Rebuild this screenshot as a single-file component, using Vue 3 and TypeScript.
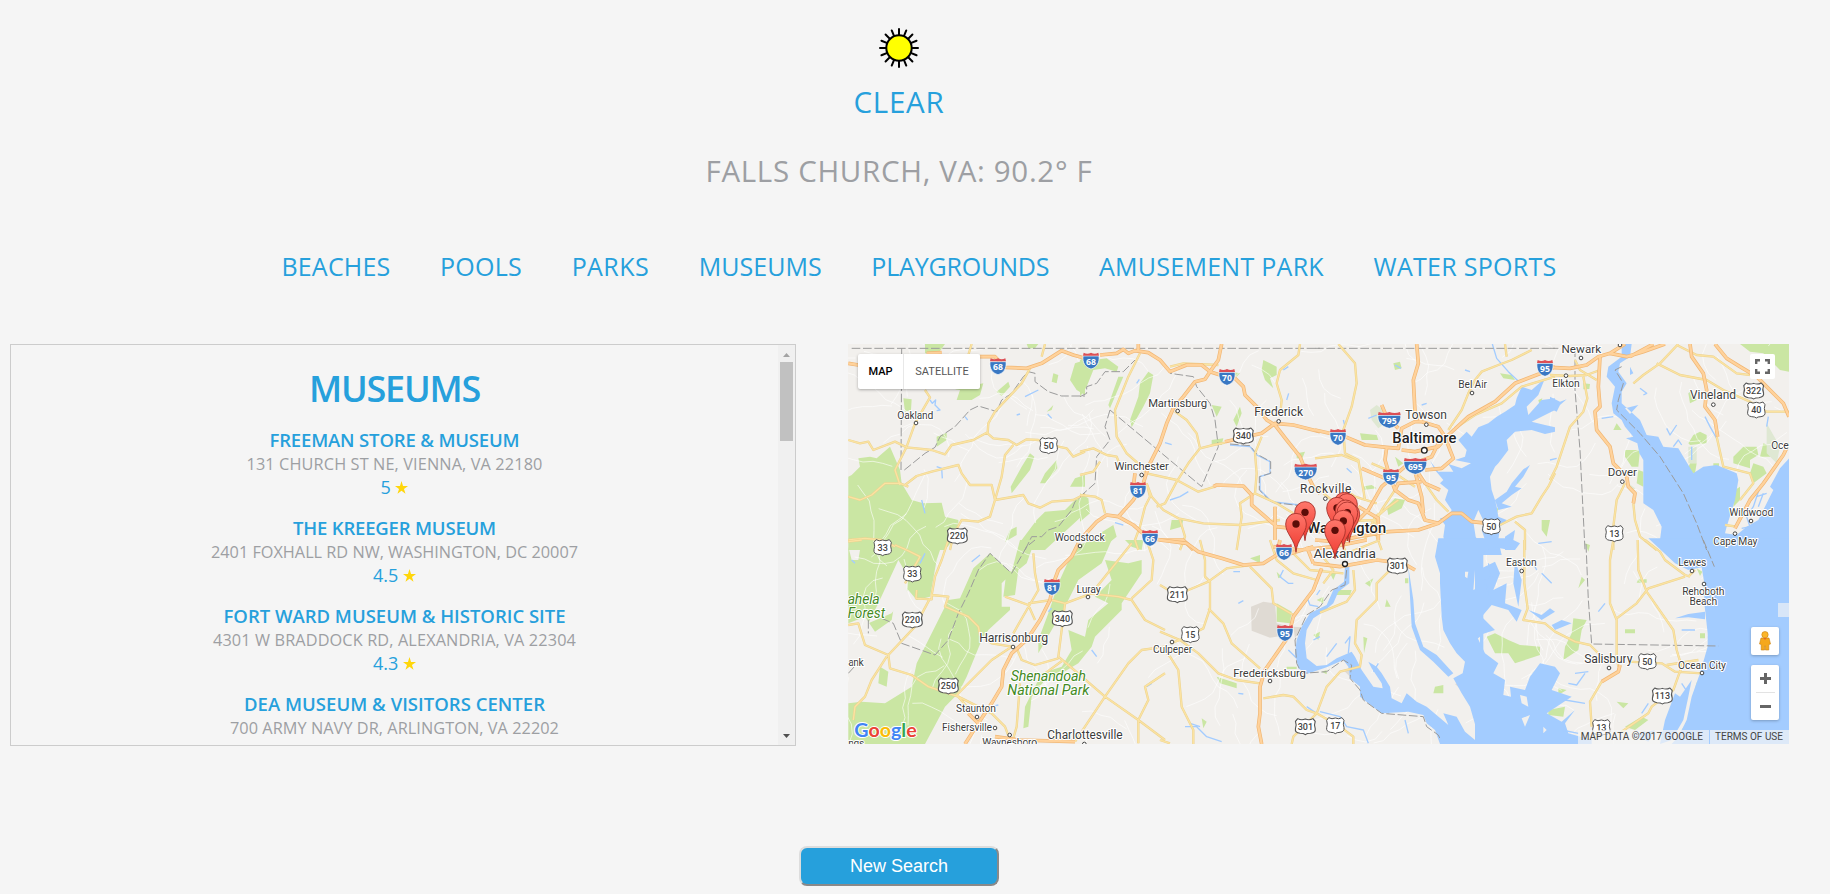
<script setup lang="ts">
interface Place { name: string; nameW: number; address: string; addressW: number; rating: string }
interface Tile {
  x: number; y: number
  water?: string; land?: string; green?: string; pale?: string; grey?: string
  stream?: string; road?: string; highway?: string; border?: string
}
/* Labels: tile index, x centre, baseline, width, font size, text */
type Label = [number, number, number, number, number, string]
type Point = [number, number, number]
type Shield = [number, number, number, string]

const ctx = document.createElement('canvas').getContext('2d')!
const family = '"Open Sans", "Noto Sans", sans-serif'

/* Letter spacing that sets a line of text to a given width. */
function track(text: string, size: number, width: number, weight = 400) {
  ctx.font = `${weight} ${size}px ${family}`
  const spacing = (width - ctx.measureText(text).width) / text.length
  return { letterSpacing: `${spacing.toFixed(3)}px` }
}

const categories: [string, number][] = [
  ['BEACHES', 109], ['POOLS', 82], ['PARKS', 77.5], ['MUSEUMS', 123],
  ['PLAYGROUNDS', 178], ['AMUSEMENT PARK', 225], ['WATER SPORTS', 183],
]

const places: Place[] = [
  { name: 'FREEMAN STORE & MUSEUM', nameW: 250, address: '131 CHURCH ST NE, VIENNA, VA 22180', addressW: 296, rating: '5' },
  { name: 'THE KREEGER MUSEUM', nameW: 203, address: '2401 FOXHALL RD NW, WASHINGTON, DC 20007', addressW: 367, rating: '4.5' },
  { name: 'FORT WARD MUSEUM & HISTORIC SITE', nameW: 342, address: '4301 W BRADDOCK RD, ALEXANDRIA, VA 22304', addressW: 363, rating: '4.3' },
  { name: 'DEA MUSEUM & VISITORS CENTER', nameW: 301, address: '700 ARMY NAVY DR, ARLINGTON, VA 22202', addressW: 329, rating: '' },
]

const rays = Array.from({ length: 16 }, (_, i) => i * 22.5)

const tiles: Tile[] = [
  {
    x: 0, y: 0,
    green: 'M10 410L20 405 45 380 40 355 75 350 95 355 135 320 165 390 170 430 200 480 235 490 290 488 300 530 340 540 340 580 300 630H10ZM240 12H300L280 40H240ZM415 130L405 165 380 180 335 180 345 150 330 148ZM490 125L495 140 470 168 455 155ZM275 290L305 278V300L275 320ZM175 175L200 178 198 210 180 215ZM690 70L720 60V165L695 150 675 120ZM555 340L568 350 555 390 500 460 497 440 530 380ZM635 360L637 385 600 430 585 430 600 400ZM720 470L690 480 660 510 600 515 575 540 530 600 520 630H600L720 520ZM720 405L690 415 675 440 720 440ZM495 570L515 560V585L480 605ZM625 100L640 105 635 130 620 125ZM605 215L625 195 620 210ZM545 12H580L570 25H550Z',
    stream: 'M255 180L262 190 272 180 270 195 285 210 275 212M360 230L368 240M275 380L290 385 292 415M540 170L580 150M608 222L620 235M230 480L240 520M515 225L525 222M335 60L345 45',
    road: 'M10 300L45 310 70 305 85 330 150 305 185 322 260 330 300 343 320 315 385 300 425 278 445 295 490 300 515 315 545 298 580 300 640 320 665 325 685 350 720 335M240 150L255 172 210 250 185 320 150 390 165 435M555 85L530 130 450 215 430 250 428 278M505 315L480 345 470 410 450 480 435 530 400 545 350 540 325 585 315 630M180 435L215 408 260 395 340 375 350 400 375 435 440 435 450 480 535 465 550 490 585 503 620 485 685 480 720 462M10 470L45 480 80 465 120 430 165 430 190 440M380 12L370 45M600 12L590 50M10 600L60 595 110 600 150 620',
    highway: 'M405 50L450 50 480 82 545 85 590 70 650 32 685 45 720 55M10 70L40 75M245 40L290 38',
    border: 'M20 25H720M170 25L168 390M178 390L240 340 270 322 285 290 330 260 375 210 400 198 440 210 455 215 470 180 500 160 535 110 550 95 570 100 570 125 610 155 650 168 720 168M720 460L690 485 680 510 640 560 610 570 590 590 560 590 540 630',
  },
  {
    x: 705, y: 0,
    green: 'M0 60L20 50 40 60 80 55 115 80 110 95 75 85 40 90 20 140 0 170ZM205 95L220 105 210 160 190 200 155 262 150 240 175 170 180 130ZM115 110L130 110 90 205 85 195ZM550 60L590 80V105L570 115 580 145 555 120 545 90ZM480 200L485 220 470 260 460 240ZM650 340L675 335 665 360 650 355ZM0 460L25 475 30 520 0 545ZM60 580L100 555 110 590 60 630H30ZM275 540H310L305 560 270 570ZM395 195L425 200 410 230ZM395 300L430 295 425 315 395 312ZM450 95L480 100 470 110Z',
    stream: 'M450 315L510 320 530 345 570 365V400L540 410V450L575 485 660 495M170 130L178 118M255 308L275 314M270 480L300 470 325 455M610 90L625 80M620 180L626 160M105 548L130 555',
    road: 'M180 40L145 110 105 210 110 290 140 340 180 375 200 400 290 420 355 455 405 440M285 215L320 240 350 280 360 325 400 315 435 308M360 325L325 370 290 425 255 490 230 500M0 335L40 325 80 345 110 350 120 375 155 380M0 405L40 395 60 365M200 430L215 470 250 510 295 535 370 550 480 555 600 540M660 12L655 45 600 90 590 130 605 180 600 230M545 290L525 340 530 400 525 460 480 490 485 530 470 630M300 540L315 590 300 630M200 430L210 470 195 500 180 560 165 600 175 630M270 80L310 70 415 75M0 465L45 470 65 480 75 520M525 460L590 490 640 520',
    highway: 'M60 45L110 40 130 28 145 40 165 32 205 38 240 60 270 95 320 75 365 75 390 95 420 105 465 115 490 140 495 165 530 200 560 240 585 255 620 300 660 350 680 400 700 440 720 460M425 12L415 60 390 95 375 118 345 125 310 170 280 205 260 250 240 310 205 380 190 430 160 480 115 530 80 525 50 545 0 600M115 530L160 555 200 590 240 600 310 600 340 630M435 305L500 290 545 280 585 250 640 255 720 275M175 12V32M400 440L410 435 490 438 515 465V495L550 525 590 560 720 575M585 500V600M165 400L160 440',
    border: 'M0 25H720M0 170L20 160 20 140 50 130 75 95 130 95 165 60M90 210L75 260 90 300 50 350 45 430 0 470M90 210L365 440 415 320 405 240 390 190 350 140 340 110 270 100M450 312L510 317 530 342 572 365V400L538 410V450L575 487 660 497',
  },
  {
    x: 1410, y: 0,
    water: 'M620 140L605 175 600 195 570 215 545 230 520 250 490 262 470 290 455 275 430 300 455 330 450 350 420 360 468 370 440 385 400 372 415 395 370 395 345 362 360 390 385 420 375 430 400 450 390 480 410 510 400 530 375 535 390 555 385 590 400 645H560L550 600 555 560 575 540 550 530 545 500 540 480 530 450 525 410 540 380 550 370 580 330 575 300 600 275 650 270 690 282 720 275V262L690 255 650 245 690 225 720 210V175L680 180 640 225 635 200 670 165 690 115 650 150ZM540 480L575 455 590 430 625 388 645 375 625 410 600 440 620 445 590 465 560 490 590 500 550 510ZM570 590L600 570 595 600 615 610 600 630H570Z',
    land: 'M490 510L475 545 482 590 500 622 510 600 500 570 507 545Z',
    green: 'M215 500L240 475 270 480 260 505 220 525ZM135 280L185 285 190 300 140 300ZM240 350L265 370 250 380ZM555 100L590 105 600 120 565 115ZM680 540H705L695 590 680 570ZM530 505L550 505 545 525ZM235 70L255 65 260 85 240 90ZM670 180L682 175 675 200ZM140 440L170 435 185 445 145 450Z',
    pale: 'M165 210L185 195 205 210 210 250 190 265 170 240Z',
    stream: 'M532 12L545 55 580 95 612 125M240 75L258 85M85 240L90 260M95 385L110 398M160 235L185 225M450 90L465 95M320 195L335 190',
    road: 'M650 30L590 60 550 75 500 95 480 120 460 160 440 210 400 270M70 12L120 70 125 130 110 200 85 270 90 340 130 360 140 420 150 480M720 110L620 140 560 190 480 225 420 265M330 430L365 480 400 515M240 450L200 510 175 560 200 630M85 545L175 540 220 500M65 430L120 470 185 490M0 355L80 345 130 365M555 555L605 530 650 520 680 470 700 440 720 400M600 545L630 570V630M170 370L240 400 300 440M250 480L180 530 150 600M570 12L575 50M0 440L50 480 90 540',
    highway: 'M305 12L310 70 295 120 300 215 320 245 370 260 390 290 405 330 415 355 380 385 330 390M0 270L90 290 150 315 215 322 250 325 260 265 300 245 320 245M720 80L690 95 600 130 540 185 460 230 400 285 370 320 300 335 260 330M215 322L210 360 225 410 240 450 280 480 310 490 330 540 370 550 410 520 440 520 470 545 520 550M140 385L210 415M375 300L350 350 270 380 200 440 160 510 110 560M200 195L215 230 250 265M370 550L310 570 220 575 130 590M300 395L320 470 325 520M310 400L330 430 375 450M240 450L250 430 320 425M130 500L190 535V600M0 600L60 605 130 590',
    border: 'M0 25H720',
  },
  {
    x: 2115, y: 0,
    water: 'M215 12V50L175 80 170 110 195 140 185 190 190 220 215 240 225 260 250 290 228 295 262 310 268 340 280 360V490L310 510 335 560 330 600 350 645H722V350L690 385 660 440 670 450 650 490 625 540 590 560 560 585 525 580 530 560 555 480 565 420 560 400 500 375 460 380 430 400 400 350 385 325 340 320 325 290 290 285 270 240 215 190V155L230 130 205 95 210 70 240 50 245 12ZM0 170L30 185 50 178 30 195 20 215 0 205ZM240 80L250 100 240 105ZM225 205L265 195 240 222Z',
    green: 'M570 12H717V95L690 90 640 40 600 35ZM415 310L430 285 450 275 470 285 470 310 420 315ZM550 350L580 320 620 320 625 345 600 360V385L550 370ZM420 370L440 370 435 400 410 395ZM610 370L640 380 650 400 610 430 600 400ZM225 330L270 330 265 380 245 380 225 350ZM265 390L280 395V440L260 430ZM555 450L570 440V480L550 500ZM200 250L215 270 190 270ZM415 160L425 150 440 180 420 190ZM100 130L120 132 118 147 100 148ZM490 370H507V395H490ZM640 310L680 325 670 350 630 350Z',
    pale: 'M650 250L690 320 680 370 650 340ZM415 320H440V370H415ZM235 430L255 445 252 465 235 445Z',
    stream: 'M630 440L610 500 590 530 600 560 575 565M640 460L625 500M465 230L480 260 500 295M655 230L650 260M350 265L360 285 380 255M370 320L385 300 395 315M425 320V360M155 235L190 230M270 145L290 160 280 165M0 360L20 355M650 460L620 470',
    road: 'M0 105L60 108 110 105 150 90M100 110L112 175 100 215 60 260 40 320 20 380 0 420M385 12L330 70 280 105 250 130M320 70L390 105 470 120 520 150 600 185 650 215 717 215M380 15L440 45 490 50 560 100 640 110M225 430L200 480 190 560V630M250 490L255 540 270 590 320 630M500 290L520 380 600 400 610 430 570 480M525 555L560 560M75 60L90 90 140 120',
    highway: 'M0 82L60 85 110 75 145 50 180 40 230 50 280 35 345 12M150 50L145 140 150 200 135 215 140 270 180 320 190 370 230 410 235 440 255 460 250 490M420 12L425 50 460 100 470 150 465 200 495 240 503 290M495 12L530 55 570 80 620 110 660 150 700 190 717 230M717 310L700 345 640 430 600 480 555 565M240 50L310 12M180 40L225 12',
    border: 'M0 25H25M75 25V150L90 330 105 630M215 80L195 90 220 130 205 180 200 210 270 280 330 350 400 460 440 550 470 630',
  },
  {
    x: 0, y: 600,
    green: 'M10 20L20 60H40L50 0H295L275 60 255 170 215 180 190 150 150 180 140 240 90 275 60 230 10 250ZM385 85L435 40 500 100 470 130V200L495 200V210L430 270 410 300 365 410 340 460 300 500 240 612H10V490L50 485 120 490 200 440 215 370 265 270 310 180 345 175ZM525 0H570L545 70 520 90 510 165 475 170 485 90 500 95ZM690 20L740 0H800L770 70 700 120 660 200 620 270 580 340V300L610 220 640 130ZM780 60L850 70 890 60V100L830 190V210L750 290 740 320 700 370 650 400 600 420 560 470 550 560 535 565 540 500 590 400 650 380 680 330 670 270 720 290 730 240 790 190 750 170 800 120ZM105 380L130 395 125 440 100 430ZM840 0L895 0 890 30 860 20Z',
    land: 'M160 60L190 110 185 160 140 220 70 250 100 190ZM180 230L240 200 300 180 255 270 205 360 140 340Z',
    stream: 'M225 70L240 40M380 65L405 45M20 60L30 70M610 215L620 205M440 500L460 495M905 440L920 430M740 330L755 350',
    road: 'M310 0L290 60 270 110 260 165 310 170 300 200 370 230 400 260 405 285 440 310 500 320M150 15L185 30 225 50 180 130 M215 150L213 175 260 178 260 165M255 175L210 260 130 345 60 315 40 250 10 255M130 345L135 385 200 405 250 440 340 470 440 520 480 560 495 600M125 350L80 420 60 470 30 500 25 540M500 320L440 360 380 420 335 465 375 510M515 325L530 360 570 375 640 355M505 280L545 210 580 150 570 100 565 40M660 190L740 160 860 10M660 190L640 350 670 375 780 470 880 540 960 600M730 160L820 170 860 180 900 240 960 270M905 0L925 60 920 120 860 175M780 470L690 605M780 470L850 370 890 330 960 320M880 540V610M880 540L910 480 900 440 960 400M480 170L550 195 570 240M550 190L620 180 660 190M525 430L515 560 500 612M655 360L600 400M10 5L50 0',
    highway: 'M700 10L680 50 640 90 625 130 615 180 585 240 545 300 500 340 475 390 470 440 440 490 400 550 360 612M450 590L520 600 690 605M370 520L400 550',
    border: 'M70 240V280M110 235L145 250 170 310 270 345 310 300 340 220 370 160 400 90 435 40 500 100 545 20 570 0M10 400L55 350',
  },
  {
    x: 945, y: 600,
    water: 'M835 -5L825 50 840 100V130L845 230 850 270 870 310 890 340 915 365 908 400 880 415 905 460 930 500 950 570 945 600 915 575 890 530 850 520 865 555 800 500 770 485 740 460 725 490 695 475 690 440 665 400 650 380 625 365 635 385 665 430 668 445 640 440 605 390 585 350 575 335 530 355 500 375 470 378 440 355 435 310 440 270 460 235 490 215 520 190 535 155 568 130V80H555L552 125 520 150 500 195 450 220 425 260 410 300 405 340 415 385 440 402 500 382 550 360 565 380 570 415 600 440V470L625 490 665 520 745 515 790 525 800 550 825 570 840 612H970V-5ZM745 80L760 180 765 250 790 320 830 345 880 400 865 410 820 365 780 330 755 260 750 170Z',
    land: 'M915 95L925 95 922 115 915 110ZM940 150L945 90 960 85V140ZM947 300L960 290V320Z',
    green: 'M350 190L395 215 390 250 350 245ZM525 150H575L570 165H525ZM680 178L692 200H675ZM610 290L622 295 612 340ZM460 285L480 275 475 300ZM825 440L850 435V460L820 460ZM170 410L230 430V445L180 430ZM125 535L140 545 130 565ZM470 180L490 170V190ZM615 130L640 115 630 140ZM380 380H410V387H380ZM485 395L500 390V403ZM270 55L300 45V70ZM350 95L365 110 355 115ZM510 100L530 95 520 120ZM735 115H745V130H735Z',
    grey: 'M273 200L310 185 345 190 350 250 390 260 380 285 330 293 275 272ZM400 260L425 262 405 295ZM885 432L920 420 905 450ZM550 390L575 388 570 410Z',
    stream: 'M385 330L410 355M370 90L360 110 385 130 400 130M75 560L110 560 140 590 185 605M235 190L250 182M480 515L540 530 560 560 610 570 625 610M440 500L470 520M690 500L685 520M735 540L745 580M480 150L470 165M480 290L460 300M220 95H240M440 170L450 195 475 200M555 310L570 290 565 340M530 310L500 350M235 460L250 462M655 370L640 395M120 560L90 550',
    road: 'M120 0L135 60V110L150 125V205L130 265 60 300 30 310M0 135L50 165 145 125 200 85 270 75M145 205L190 250 215 310 260 350 300 385M0 275L60 300 115 340 175 400 230 420 300 430M30 350L55 390 65 500 100 570V612M310 475L370 465 400 470 440 510 470 520 540 560 580 590V612M470 520L500 440 540 395 600 380 605 345 585 310 590 240 650 180V130L695 85M470 520L400 590 395 612M270 80L335 145 340 190 400 225M580 90L585 150 560 185 480 218M330 0L350 60 400 100 470 120M400 40L450 90 550 100M480 40L520 90 490 130M540 0L560 40 660 0M0 320L30 350M0 600L30 610',
    highway: 'M0 0L80 10 115 35 185 55 250 75 310 70 350 45 360 0M485 85L460 150 400 230 385 290 350 340 315 390 300 440V520L295 560 305 612M460 70L540 80 650 60 730 70 765 90M360 50L460 20M460 70L440 20M340 20L420 30 520 20 620 0',
    border: 'M560 90L555 135 515 150 480 200 440 225 405 300 410 370 425 400 500 395 550 360 575 375 570 415 600 450 610 480 665 520 790 530 800 560 835 585 842 600',
  },
  {
    x: 1890, y: 600,
    water: 'M0 -5H110L105 30 50 20 15 45 20 85 60 65 75 100 55 150 95 130 90 190 140 210 125 245 100 210 50 195 20 230 60 270 5 288 30 340 70 370 55 400 90 420 85 465 108 470 105 440 150 450 165 410 195 370 240 380 255 400 230 450 290 470 215 520 260 545 300 510 270 550 280 580 350 600V612H0ZM520 -5L600 70 640 90 680 82 688 130V190L698 280V320L675 400 650 470 635 540 610 590 590 612H942V-5ZM570 540L600 460 615 470 650 420 640 470 625 540 590 600 555 612ZM600 235L640 222 690 215V238L640 232ZM120 60L140 120 130 200 115 130ZM160 210L200 225 225 205 240 215 200 240ZM230 255L260 240 290 250 240 270ZM480 585L540 570 520 605Z',
    land: 'M135 465L155 470 160 500 140 490ZM140 535L165 525 150 560ZM205 560L215 570 205 580Z',
    green: 'M35 290L60 280 100 300 135 315 195 320V345L120 370 100 340 60 340ZM295 235L335 240 320 270 310 330 265 360 270 320 290 280ZM320 110L330 120 310 145ZM555 0L605 45 600 65 570 40ZM665 85L682 95 675 108ZM220 510L270 500 265 530 220 525ZM425 485L460 490 445 505ZM675 280H690V295H675ZM665 425L640 540 620 570 610 612H625L645 540 668 450ZM450 560L500 530 520 540 480 570ZM490 118H515V128H485ZM250 445L275 450 250 465ZM450 268H480V280H450ZM330 10L345 15 340 35Z',
    stream: 'M370 215L390 190M300 400L340 395M280 430L305 435 330 400M500 520L520 490M200 100L230 130M190 10L230 5M620 430L640 460M40 70L50 110 30 120M170 60L185 90M260 570L310 580M270 480L330 490M620 270H660M30 130L50 180M480 590L510 575',
    road: 'M415 0L405 60V190L425 240V350L430 380M380 425L345 485 350 560M148 0V130L158 205 145 240 210 250 240 275 300 305 345 315 380 350 400 360M510 0L555 35 570 60 630 105 645 110M630 110L520 145 485 190 425 235M488 0L490 90 515 155 595 270 605 330 620 380 595 450 530 500 520 520 440 575M460 365L560 370 600 395 680 400M575 375L670 360M640 110L660 90',
    highway: 'M435 375L430 395 380 425',
    border: 'M333 12L340 180 350 312 730 318M685 0L718 80',
  },
]

/* Local roads: short winding lines from a seeded generator. */
function localRoads() {
  let seed = 90217
  const rnd = () => (seed = (seed * 16807) % 2147483647) / 2147483647
  let d = ''
  for (let i = 0; i < 230; i++) {
    let x = rnd() * 2800
    let y = rnd() * 1200
    let a = rnd() * Math.PI * 2
    d += `M${x.toFixed(0)} ${y.toFixed(0)}`
    const n = 4 + Math.floor(rnd() * 7)
    for (let k = 0; k < n; k++) {
      a += (rnd() - 0.5) * 1.1
      x += Math.cos(a) * 30
      y += Math.sin(a) * 30
      d += `L${x.toFixed(0)} ${y.toFixed(0)}`
    }
  }
  return d
}
const local = localRoads()

const labels: Label[] = [
  [0, 211, 236, 108, 31, 'Oakland'], [1, 293, 200, 177, 34, 'Martinsburg'], [1, 596, 227, 146, 36, 'Frederick'],
  [1, 185, 391, 163, 34, 'Winchester'], [2, 333, 237, 125, 36, 'Towson'],
  [2, 473, 145, 86, 31, 'Bel Air'], [2, 32, 459, 154, 36, 'Rockville'], [3, 94, 39, 119, 35, 'Newark'],
  [3, 48, 141, 82, 31, 'Elkton'], [3, 489, 177, 138, 36, 'Vineland'], [3, 217, 409, 88, 35, 'Dover'],
  [3, 690, 326, 52, 31, 'Oce'], [3, 604, 529, 132, 31, 'Wildwood'], [3, 556, 616, 132, 31, 'Cape May'],
  [4, 704, 4, 150, 31, 'Woodstock'], [4, 731, 158, 73, 32, 'Luray'], [4, 506, 306, 207, 37, 'Harrisonburg'],
  [4, 33, 377, 46, 31, 'ank'], [4, 393, 517, 120, 31, 'Staunton'], [4, 366, 574, 150, 31, 'Fishersville'],
  [4, 494, 619, 165, 31, 'Waynesboro'], [4, 720, 597, 226, 36, 'Charlottesville'], [4, 34, 621, 48, 31, 'ngs'],
  [5, 554, 55, 187, 41, 'Alexandria'], [5, 38, 340, 118, 31, 'Culpeper'], [5, 329, 411, 218, 34, 'Fredericksburg'],
  [6, 139, 79, 92, 31, 'Easton'], [6, 652, 79, 84, 31, 'Lewes'], [6, 685, 166, 127, 31, 'Rehoboth'],
  [6, 685, 196, 83, 31, 'Beach'], [6, 400, 370, 145, 37, 'Salisbury'], [6, 681, 386, 144, 31, 'Ocean City'],
]
const cities: Label[] = [[2, 328, 309, 192, 44, 'Baltimore'], [2, 95, 579, 237, 44, 'Washington']]
const parks: Label[] = [
  [4, 610, 422, 226, 43, 'Shenandoah'], [4, 610, 464, 246, 43, 'National Park'],
  [4, 56, 192, 96, 42, 'ahela'], [4, 64, 233, 112, 41, 'Forest'],
]
const towns: Point[] = [
  [0, 213, 249], [1, 293, 213], [1, 596, 244], [1, 185, 405], [2, 334, 254], [2, 471, 159], [2, 31, 476],
  [3, 93, 54], [3, 48, 107], [3, 490, 194], [3, 217, 425], [3, 603, 543], [3, 555, 581], [3, 210, 15],
  [4, 705, 18], [4, 729, 171], [4, 504, 321], [4, 396, 531], [4, 450, 564], [4, 494, 585], [4, 718, 612],
  [5, 36, 306], [5, 330, 423], [6, 140, 93], [6, 651, 93], [6, 687, 132], [6, 402, 384], [6, 681, 399],
]
const interstates: Shield[] = [
  [0, 459, 79, '68'], [1, 33, 62, '68'], [1, 441, 111, '70'], [1, 677, 395, '270'], [1, 174, 450, '81'],
  [1, 210, 594, '66'], [2, 69, 291, '70'], [2, 223, 240, '795'], [2, 301, 378, '695'], [2, 228, 411, '95'],
  [2, 690, 84, '95'], [4, 621, 141, '81'], [5, 372, 36, '66'], [5, 375, 279, '95'],
]
const routes: Shield[] = [
  [0, 611, 317, '50'], [0, 337, 588, '220'], [1, 490, 288, '340'], [2, 529, 560, '50'], [3, 611, 153, '322'],
  [3, 619, 210, '40'], [3, 193, 581, '13'], [4, 113, 23, '33'], [4, 202, 102, '33'], [4, 202, 240, '220'],
  [4, 652, 236, '340'], [4, 310, 438, '250'], [5, 52, 164, '211'], [5, 91, 284, '15'], [5, 712, 78, '301'],
  [5, 436, 560, '301'], [5, 526, 557, '17'], [6, 517, 365, '50'], [6, 562, 468, '113'], [6, 379, 563, '13'],
]
const pins: Point[] = [
  [2, 88, 489], [2, 96, 493], [2, 66, 504], [1, 675, 517], [2, 92, 512], [2, 103, 522],
  [2, 97, 518], [2, 85, 543], [1, 648, 552], [2, 60, 571],
]
const at = (p: [number, number, number, ...unknown[]]) => {
  const t = tiles[p[0]]!
  return `translate(${t.x + p[1]} ${t.y + p[2]})`
}
const wide = (n: string) => n.length > 2
const google = [['G', '#4285f4'], ['o', '#ea4335'], ['o', '#fbbc05'], ['g', '#4285f4'], ['l', '#34a853'], ['e', '#ea4335']]
</script>

<template>
  <main class="page">
    <header class="weather">
      <svg class="sun" viewBox="-20 -20 40 40">
        <line v-for="r in rays" :key="r" y1="-12" y2="-19" :transform="`rotate(${r})`" />
        <circle r="12.7" />
      </svg>
      <div class="condition" :style="track('CLEAR', 29.5, 91)">CLEAR</div>
      <div class="city" :style="track('FALLS CHURCH, VA: 90.2° F', 29.5, 387)">FALLS CHURCH, VA: 90.2° F</div>
    </header>

    <nav class="categories">
      <a v-for="[name, w] in categories" :key="name" :style="track(name, 25, w)">{{ name }}</a>
    </nav>

    <div class="results">
      <section class="list">
        <div class="entries">
          <h2 :style="track('MUSEUMS', 36, 171, 600)">MUSEUMS</h2>
          <article v-for="p in places" :key="p.name">
            <h3 :style="track(p.name, 18.5, p.nameW, 600)">{{ p.name }}</h3>
            <p class="address" :style="track(p.address, 16.3, p.addressW)">{{ p.address }}</p>
            <p v-if="p.rating" class="rating">{{ p.rating }} <svg viewBox="0 0 24 24"><path d="M12 0l2.8 9.1H24l-7.4 5.5 2.8 9L12 18l-7.4 5.6 2.8-9L0 9.100h9.200z" /></svg></p>
          </article>
        </div>
        <div class="scrollbar">
          <svg class="up" viewBox="0 0 7 4"><path d="M3.500 0L7 4H0z" /></svg>
          <div class="thumb"></div>
          <svg class="down" viewBox="0 0 7 4"><path d="M0 0h7L3.500 4z" /></svg>
        </div>
      </section>

      <section class="map">
        <svg class="canvas" viewBox="9 12 2823 1200" preserveAspectRatio="none">
          <defs>
            <linearGradient id="pin" x1="0" y1="0" x2="0" y2="1">
              <stop offset="0" stop-color="#ff776b" /><stop offset="1" stop-color="#ee3a30" />
            </linearGradient>
          </defs>
          <rect class="ground" x="0" y="0" width="2840" height="1220" />
          <g v-for="(t, i) in tiles" :key="'g' + i" :transform="`translate(${t.x} ${t.y})`">
            <path class="green" :d="t.green" />
            <path v-if="t.pale" class="pale" :d="t.pale" />
            <path v-if="t.grey" class="grey" :d="t.grey" />
            <path v-if="i === 4" class="ground" :d="t.land" />
          </g>
          <path class="local" :d="local" />
          <g v-for="(t, i) in tiles" :key="'w' + i" :transform="`translate(${t.x} ${t.y})`">
            <path v-if="t.water" class="water" :d="t.water" />
            <path v-if="t.land && i !== 4" class="ground" :d="t.land" />
            <path class="stream" :d="t.stream" />
          </g>
          <g v-for="(t, i) in tiles" :key="'r' + i" :transform="`translate(${t.x} ${t.y})`">
            <path class="border" :d="t.border" />
            <path class="road-edge" :d="t.road" />
            <path class="road" :d="t.road" />
          </g>
          <g v-for="(t, i) in tiles" :key="'h' + i" :transform="`translate(${t.x} ${t.y})`">
            <path class="highway-edge" :d="t.highway" />
            <path class="highway" :d="t.highway" />
          </g>

          <circle v-for="(p, i) in towns" :key="'t' + i" class="town" r="5.500" :transform="at(p)" />
          <circle class="capital" r="8.500" cx="1738" cy="331" />
          <circle class="capital" r="7.500" cx="1500" cy="672" />

          <g v-for="(s, i) in interstates" :key="'i' + i" :transform="at(s)">
            <path v-if="wide(s[3])" class="blue" d="M-34 -14H34C36 6 24 20 0 25C-24 20 -36 6 -34 -14Z" />
            <path v-else class="blue" d="M-24 -14H24C26 6 18 20 0 25C-18 20 -26 6 -24 -14Z" />
            <path v-if="wide(s[3])" class="red" d="M-32 -24Q-16 -18 0 -24Q16 -18 32 -24L34 -15H-34Z" />
            <path v-else class="red" d="M-22 -24Q-11 -18 0 -24Q11 -18 22 -24L24 -15H-24Z" />
            <text class="interstate" y="12">{{ s[3] }}</text>
          </g>
          <g v-for="(s, i) in routes" :key="'u' + i" :transform="at(s)">
            <path class="route" :transform="wide(s[3]) ? 'scale(1.14 1)' : ''" d="M-20 -24Q-10 -18 0 -23Q10 -18 20 -24L26 -16Q22 -4 26 6Q28 18 14 20Q4 20 0 24Q-4 20 -14 20Q-28 18 -26 6Q-22 -4 -26 -16Z" />
            <text class="route-no" y="9">{{ s[3] }}</text>
          </g>

          <text v-for="(l, i) in labels" :key="'l' + i" class="label" :transform="at(l)" :font-size="l[4]" :textLength="l[3]">{{ l[5] }}</text>
          <text v-for="l in cities" :key="l[5]" class="label major" :transform="at(l)" :font-size="l[4]" :textLength="l[3]">{{ l[5] }}</text>
          <text v-for="l in parks" :key="l[5]" class="label park" :transform="at(l)" :font-size="l[4]" :textLength="l[3]">{{ l[5] }}</text>

          <g v-for="(p, i) in pins" :key="'p' + i" :transform="at(p)">
            <path class="pin" d="M0 85C-3 45 -31 30 -31 0A31 32 0 0 1 31 0C31 30 3 45 0 85Z" />
            <circle class="dot" r="11" />
          </g>

          <text class="google" x="28" y="1190" textLength="187"><tspan v-for="(g, i) in google" :key="i" :fill="g[1]">{{ g[0] }}</tspan></text>
        </svg>

        <div class="types"><span class="on">MAP</span><span>SATELLITE</span></div>
        <div class="control fullscreen">
          <svg viewBox="0 0 15 15"><path d="M1.200 5V1.200H5M10 1.200h3.800V5M13.800 10v3.800H10M5 13.800H1.200V10" /></svg>
        </div>
        <div class="tip"></div>
        <div class="control pegman">
          <svg viewBox="0 0 12 20">
            <path fill="#f5a81c" stroke="#c98212" stroke-width=".6" d="M2 7h8l1.500 6-1.700.5V19H6.400v-4h-.8v4H2.200v-5.500L.5 13z" />
            <circle cx="6" cy="3.700" r="3.200" fill="#fbb62b" stroke="#c98212" stroke-width=".6" />
            <path fill="#e8622c" d="M4.500 7h3L6 9z" />
          </svg>
        </div>
        <div class="control zoom"><i class="plus"></i><hr /><i class="minus"></i></div>
        <div class="credits"><span>MAP DATA ©2017 GOOGLE</span><span>TERMS OF USE</span></div>
      </section>
    </div>

    <button class="search" type="button">New Search</button>
  </main>
</template>

<style>
body { margin: 0; background: #f5f5f5; }
</style>

<style scoped>
.page {
  box-sizing: border-box;
  width: 1798px;
  height: 894px;
  display: flex;
  flex-direction: column;
  overflow: hidden;
  font-family: "Open Sans", "Noto Sans", sans-serif;
  color: #26a0dc;
}
.weather { display: flex; flex-direction: column; align-items: center; padding-top: 28px; }
.sun { width: 40px; height: 40px; }
.sun line { stroke: #000; stroke-width: 2; stroke-linecap: round; }
.sun circle { fill: #ff0; stroke: #000; stroke-width: 2; }
.condition, .city { font-size: 29.5px; line-height: 40px; white-space: nowrap; }
.condition { margin-top: 14px; }
.city { margin-top: 29px; color: #9d9fa3; }
.categories { display: flex; justify-content: center; gap: 49.6px; margin: 58px 0 0 40px; font-size: 25px; line-height: 34px; white-space: nowrap; }
.results { display: flex; margin: 61px 0 0 10px; }
.list { box-sizing: border-box; display: flex; width: 786px; height: 402px; border: 1px solid #ccc; overflow: hidden; }
.entries { flex: 1; text-align: center; white-space: nowrap; }
h2 { margin: 19px 0 14px; font-size: 36px; font-weight: 600; line-height: 50px; }
article { height: 88px; }
h3 { margin: 0; font-size: 18.5px; font-weight: 600; line-height: 24px; }
p { margin: 0; }
.address { color: #9d9fa3; font-size: 16.3px; line-height: 24px; }
.rating { font-size: 18px; line-height: 22px; }
.rating svg { width: 13px; height: 13px; fill: #ffd60a; }
.scrollbar { box-sizing: border-box; width: 17px; padding: 8px 0 7px; display: flex; flex-direction: column; align-items: center; background: #f0f0f0; }
.scrollbar svg { width: 7px; height: 4px; }
.up { fill: #a3a3a3; }
.down { fill: #505050; margin-top: auto; }
.thumb { width: 13px; height: 79px; margin-top: 5px; background: #c1c1c1; }
.map { position: relative; width: 941px; height: 400px; margin-left: 52px; overflow: hidden; font-family: Roboto, sans-serif; }
.canvas { display: block; width: 941px; height: 400px; }
.ground { fill: #f2f0ed; }
.green { fill: #cae6a3; }
.pale { fill: #dfe8d3; }
.grey { fill: #dfdad3; }
.water { fill: #a3ccff; }
.canvas path { stroke-linejoin: round; }
.local, .stream, .road, .road-edge, .highway, .highway-edge, .border { fill: none; }
.local { stroke: #fff; stroke-width: 3; opacity: .6; }
.stream { stroke: #a3ccff; stroke-width: 4; }
.road-edge { stroke: #ecd28f; stroke-width: 7; }
.road { stroke: #fbe3a2; stroke-width: 4; }
.highway-edge { stroke: #f0b674; stroke-width: 11; }
.highway { stroke: #ffd29b; stroke-width: 7; }
.border { stroke: #9b9b9b; stroke-width: 3; stroke-dasharray: 26 8; }
.town { fill: #fff; stroke: #444; stroke-width: 3; }
.capital { fill: #fff; stroke: #222; stroke-width: 4; }
.blue { fill: #3a78c3; stroke: #fff; stroke-width: 2; }
.red { fill: #dc4f55; }
.interstate { fill: #fff; font: 700 26px "Noto Sans", sans-serif; text-anchor: middle; }
.route { fill: #fff; stroke: #555; stroke-width: 3; }
.route-no { fill: #444; font: 500 27px Roboto, sans-serif; text-anchor: middle; }
.label { fill: #3c3c3c; text-anchor: middle; stroke: #fff; stroke-width: 6; stroke-linejoin: round; paint-order: stroke; }
.major { fill: #222; font-weight: 500; }
.park { fill: #458b1f; font-style: italic; }
.pin { fill: url(#pin); stroke: #a22c26; stroke-width: 2.500; }
.dot { fill: #5b0d08; }
.google { font: 700 59px Lato, sans-serif; stroke: #fff; stroke-width: 6; paint-order: stroke; }
.types { position: absolute; left: 10px; top: 10px; display: flex; height: 35px; background: #fff; border-radius: 2px; box-shadow: 0 1px 3px rgba(0, 0, 0, .3); font-size: 11px; line-height: 35px; color: #565656; }
.types span { width: 76px; text-align: center; }
.types .on { width: 45px; border-right: 1px solid #e8e8e8; color: #000; font-weight: 500; }
.control { position: absolute; display: flex; align-items: center; justify-content: center; background: #fff; border-radius: 2px; box-shadow: 0 1px 3px rgba(0, 0, 0, .25); }
.fullscreen { left: 902px; top: 10px; width: 25px; height: 25px; box-shadow: none; }
.fullscreen svg { width: 15px; height: 15px; fill: none; stroke: #666; stroke-width: 2.400; }
.tip { position: absolute; right: 0; top: 259px; width: 11px; height: 14px; background: rgba(245, 245, 245, .65); }
.pegman { left: 903px; top: 283px; width: 28px; height: 28px; }
.pegman svg { width: 12px; height: 20px; }
.zoom { left: 903px; top: 321px; width: 28px; height: 55px; flex-direction: column; }
.zoom hr { width: 19px; height: 1px; margin: 8px 0; border: 0; background: #e3e3e3; }
.zoom i { width: 11px; height: 11px; background: linear-gradient(#666, #666) center / 11px 3px no-repeat; }
.zoom .plus { background: linear-gradient(#666, #666) center / 11px 3px no-repeat, linear-gradient(#666, #666) center / 3px 11px no-repeat; }
.credits { position: absolute; right: 0; bottom: 0; display: flex; height: 14px; color: #444; font-size: 10px; line-height: 14px; white-space: nowrap; }
.credits span { padding: 0 6px 0 3px; background: rgba(245, 245, 245, .7); letter-spacing: 0; }
.credits span + span { margin-left: 1px; padding: 0 6px 0 5px; }
.search { align-self: center; box-sizing: border-box; width: 200px; height: 40px; margin: 100px 0 0; border: 2px outset #ddd; border-radius: 8px; background: #26a0dc; color: #fff; font: 18px "Liberation Sans", Arial, sans-serif; }
</style>
